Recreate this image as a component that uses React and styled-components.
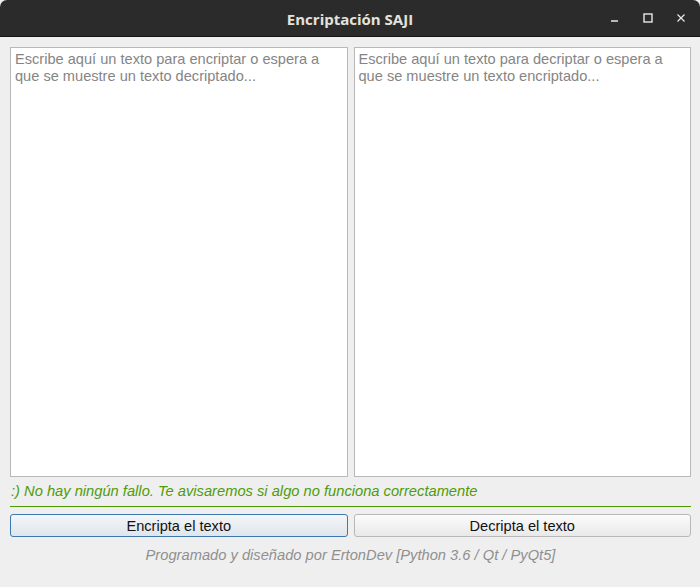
import React from "react";
import styled, { createGlobalStyle } from "styled-components";

const Global = createGlobalStyle`
  html, body { margin: 0; padding: 0; background: #2b2b2b; }
  body { width: 700px; height: 587px; overflow: hidden; }
  * { box-sizing: border-box; }
`;

const Window = styled.div`
  width: 700px;
  height: 587px;
  display: flex;
  flex-direction: column;
  background: #efefef;
  font-family: "Liberation Sans", Arial, sans-serif;
`;

const TitleBar = styled.div`
  height: 37px;
  flex: none;
  background: #2b2b2b;
  border-radius: 7px 7px 0 0;
  border-bottom: 1px solid #161616;
  position: relative;
  display: flex;
  align-items: center;
  justify-content: center;
`;

const Title = styled.div`
  color: #e4e2dd;
  font-family: "Open Sans", "DejaVu Sans", sans-serif;
  font-weight: 700;
  font-size: 15px;
  letter-spacing: 0;
  margin-top: 1px;
`;

const Controls = styled.div`
  position: absolute;
  right: 3px;
  top: 0;
  height: 36px;
  display: flex;
  align-items: center;
`;

const CtrlBtn = styled.div`
  width: 33px;
  height: 36px;
  display: flex;
  align-items: center;
  justify-content: center;
  color: #e8e8e8;
`;

const Body = styled.div`
  flex: 1;
  display: flex;
  flex-direction: column;
  padding: 10px 9px 0 10px;
`;

const Editors = styled.div`
  display: flex;
  gap: 6px;
  height: 430px;
`;

const Editor = styled.textarea`
  flex: 1;
  min-width: 0;
  height: 100%;
  resize: none;
  background: #ffffff;
  border: 1px solid #b9b9b9;
  border-radius: 0;
  padding: 3px 4px;
  margin: 0;
  font-family: "Liberation Sans", Arial, sans-serif;
  font-size: 14.6px;
  line-height: 17px;
  color: #222;
  caret-color: #000;
  outline: none;
  &::placeholder { color: #858585; opacity: 1; }
`;

const Status = styled.div`
  margin-top: 6px;
  color: #4e9c0a;
  font-style: italic;
  font-size: 14.7px;
  line-height: 17px;
  padding-left: 1px;
`;

const Rule = styled.div`
  margin-top: 6px;
  height: 1px;
  background: #4e9a06;
`;

const Buttons = styled.div`
  margin-top: 7px;
  display: flex;
  gap: 6px;
`;

const Button = styled.button`
  flex: 1;
  height: 23px;
  border-radius: 3px;
  border: 1px solid ${(p) => (p.$focused ? "#3d78ae" : "#b8b8b8")};
  background: ${(p) =>
    p.$focused
      ? "linear-gradient(#f4f6f8, #dfe5eb)"
      : "linear-gradient(#fbfbfb, #e9e9e9)"};
  font-family: "Liberation Sans", Arial, sans-serif;
  font-size: 14.6px;
  color: #111;
  padding: 0;
  outline: none;
`;

const Footer = styled.div`
  margin-top: 10px;
  text-align: center;
  color: #8f8f8f;
  font-style: italic;
  font-size: 14.7px;
  line-height: 17px;
`;

export default function App() {
  return (
    <>
      <Global />
      <Window>
        <TitleBar>
          <Title>Encriptación SAJI</Title>
          <Controls>
            <CtrlBtn>
              <svg width="10" height="10" viewBox="0 0 10 10">
                <line x1="1" y1="8" x2="8" y2="8" stroke="currentColor" strokeWidth="1.5" />
              </svg>
            </CtrlBtn>
            <CtrlBtn>
              <svg width="10" height="10" viewBox="0 0 10 10">
                <rect x="1" y="1" width="8" height="8" fill="none" stroke="currentColor" strokeWidth="1.4" />
              </svg>
            </CtrlBtn>
            <CtrlBtn>
              <svg width="10" height="10" viewBox="0 0 10 10">
                <path d="M1.5 1.5 L8.5 8.5 M8.5 1.5 L1.5 8.5" stroke="currentColor" strokeWidth="1.2" />
              </svg>
            </CtrlBtn>
          </Controls>
        </TitleBar>
        <Body>
          <Editors>
            <Editor autoFocus placeholder="Escribe aquí un texto para encriptar o espera a que se muestre un texto decriptado..." />
            <Editor placeholder="Escribe aquí un texto para decriptar o espera a que se muestre un texto encriptado..." />
          </Editors>
          <Status>:) No hay ningún fallo. Te avisaremos si algo no funciona correctamente</Status>
          <Rule />
          <Buttons>
            <Button $focused>Encripta el texto</Button>
            <Button>Decripta el texto</Button>
          </Buttons>
          <Footer>Programado y diseñado por ErtonDev [Python 3.6 / Qt / PyQt5]</Footer>
        </Body>
      </Window>
    </>
  );
}
